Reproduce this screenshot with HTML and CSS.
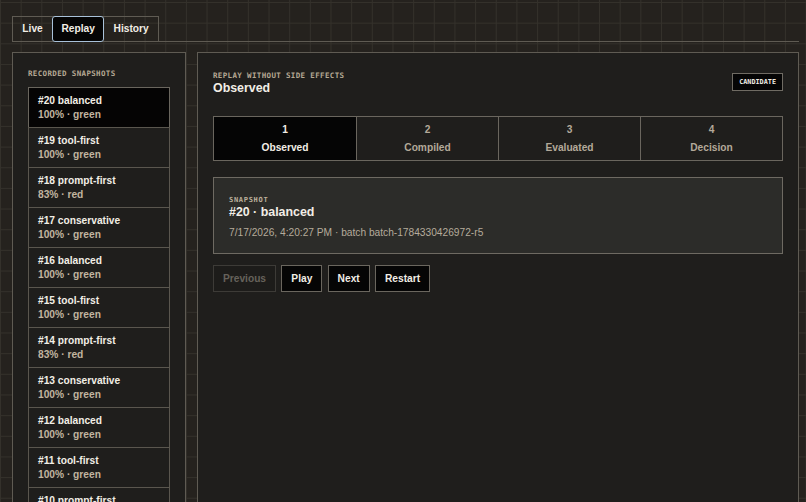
FILE: index.html
```html
<!DOCTYPE html>
<html>
<head>
<meta charset="utf-8">
<link rel="stylesheet" href="styles.css">
</head>
<body>
<div class="page">
  <nav class="nav">
    <div class="tabs">
      <div class="tab">Live</div>
      <div class="tab active">Replay</div>
      <div class="tab">History</div>
    </div>
  </nav>
  <main class="layout">
    <aside class="panel side">
      <div class="label">RECORDED SNAPSHOTS</div>
      <ul class="list">
        <li class="item selected"><div class="t">#20 balanced</div><div class="s">100% · green</div></li>
        <li class="item"><div class="t">#19 tool-first</div><div class="s">100% · green</div></li>
        <li class="item"><div class="t">#18 prompt-first</div><div class="s">83% · red</div></li>
        <li class="item"><div class="t">#17 conservative</div><div class="s">100% · green</div></li>
        <li class="item"><div class="t">#16 balanced</div><div class="s">100% · green</div></li>
        <li class="item"><div class="t">#15 tool-first</div><div class="s">100% · green</div></li>
        <li class="item"><div class="t">#14 prompt-first</div><div class="s">83% · red</div></li>
        <li class="item"><div class="t">#13 conservative</div><div class="s">100% · green</div></li>
        <li class="item"><div class="t">#12 balanced</div><div class="s">100% · green</div></li>
        <li class="item"><div class="t">#11 tool-first</div><div class="s">100% · green</div></li>
        <li class="item"><div class="t">#10 prompt-first</div><div class="s">83% · red</div></li>
        <li class="item"><div class="t">#9 conservative</div><div class="s">100% · green</div></li>
      </ul>
    </aside>
    <section class="panel main">
      <header class="head">
        <div>
          <div class="label">REPLAY WITHOUT SIDE EFFECTS</div>
          <h1 class="title">Observed</h1>
        </div>
        <span class="badge">CANDIDATE</span>
      </header>
      <div class="steps">
        <div class="step current"><div class="n">1</div><div class="l">Observed</div></div>
        <div class="step"><div class="n">2</div><div class="l">Compiled</div></div>
        <div class="step"><div class="n">3</div><div class="l">Evaluated</div></div>
        <div class="step"><div class="n">4</div><div class="l">Decision</div></div>
      </div>
      <div class="card">
        <div class="label small">SNAPSHOT</div>
        <div class="card-title">#20 · balanced</div>
        <div class="meta">7/17/2026, 4:20:27 PM · batch batch-1784330426972-r5</div>
      </div>
      <div class="controls">
        <button class="btn" disabled>Previous</button>
        <button class="btn">Play</button>
        <button class="btn">Next</button>
        <button class="btn">Restart</button>
      </div>
    </section>
  </main>
</div>
</body>
</html>
```
FILE: styles.css
```css
html, body {
  margin: 0;
  padding: 0;
  height: 100%;
  overflow: hidden;
}
body {
  background-color: #25221e;
  background-image:
    linear-gradient(#34312b 1px, transparent 1px),
    linear-gradient(90deg, #34312b 1px, transparent 1px);
  background-size: 20.67px 20.67px;
  background-position: 0 2px, 0 0;
  font-family: "Liberation Sans", Arial, sans-serif;
  font-size: 10.2px;
  color: #f2eee6;
}
.page {
  padding: 16px 7px 0 12px;
}
.nav {
  display: flex;
  border-bottom: 1px solid #5f5b53;
}
.tabs {
  display: flex;
  border: 1px solid #5f5b53;
  margin-bottom: -1px;
  height: 24px;
}
.tab {
  font-weight: bold;
  padding: 0 8.35px;
  border: 1px solid transparent;
  border-top: 0;
  border-bottom: 0;
  line-height: 24px;
  color: #f2eee6;
}
.tab.active {
  margin: -1px 0;
  height: 24px;
  border: 1px solid #a9c2da;
  border-radius: 3px;
  background: #050505;
  position: relative;
  z-index: 1;
}
.layout {
  display: grid;
  grid-template-columns: 174px 1fr;
  gap: 11px;
  margin-top: 10px;
}
.panel {
  background: #1f1e1c;
  border: 1px solid #5f5b53;
  min-height: 470px;
}
.side {
  padding: 16px 15px 0 15px;
}
.label {
  font-family: "DejaVu Sans Mono", "Liberation Mono", monospace;
  font-weight: bold;
  font-size: 7.5px;
  letter-spacing: 0.35px;
  line-height: 9px;
  color: #b6a994;
}
.list {
  list-style: none;
  margin: 9px 0 0 0;
  padding: 0;
}
.item {
  border: 1px solid #5a564e;
  margin-top: -1px;
  padding: 6px 9px 5px;
}
.item:first-child {
  margin-top: 0;
}
.item.selected {
  background: #050404;
  border-color: #6a665e;
}
.item .t {
  font-weight: bold;
  line-height: 14px;
  color: #f2eee6;
}
.item .s {
  font-weight: bold;
  line-height: 14px;
  color: #c2b5a0;
}
.main {
  padding: 17px 15px 0 15px;
}
.head {
  display: flex;
  justify-content: space-between;
  align-items: flex-start;
}
.head .label {
  line-height: 11px;
}
.title {
  margin: 0;
  font-size: 12.4px;
  line-height: 15px;
  font-weight: bold;
  color: #f2eee6;
}
.badge {
  font-family: "DejaVu Sans Mono", "Liberation Mono", monospace;
  font-weight: bold;
  font-size: 6.8px;
  letter-spacing: 0;
  color: #f2eee6;
  background: #050505;
  border: 1px solid #6f6b63;
  padding: 0 6px;
  line-height: 16px;
  margin-top: 3px;
}
.steps {
  display: grid;
  grid-template-columns: repeat(4, 1fr);
  margin-top: 20px;
  border: 1px solid #6a665e;
}
.step {
  text-align: center;
  padding: 6px 0 5px;
  font-weight: bold;
  color: #b3a999;
  border-left: 1px solid #6a665e;
}
.step:first-child {
  border-left: 0;
}
.step.current {
  background: #050505;
  color: #f2eee6;
}
.step .n {
  line-height: 14px;
}
.step .l {
  margin-top: 4px;
  line-height: 14px;
}
.card {
  margin-top: 16px;
  background: #2c2c29;
  border: 1px solid #6e6a62;
  padding: 17px 15px 13px;
}
.label.small {
  font-size: 7px;
  letter-spacing: 0.7px;
  line-height: 10px;
  color: #bdb19d;
}
.card-title {
  font-size: 12.4px;
  font-weight: bold;
  line-height: 15px;
}
.meta {
  margin-top: 5px;
  line-height: 15px;
  color: #b5ab9b;
}
.controls {
  display: flex;
  gap: 5.3px;
  margin-top: 11px;
}
.btn {
  font-family: "Liberation Sans", Arial, sans-serif;
  font-size: 10.2px;
  font-weight: bold;
  height: 27px;
  padding: 0 9px;
  background: #050505;
  color: #f2eee6;
  border: 1px solid #6a665e;
  border-radius: 0;
}
.btn:disabled {
  background: #1d1c1a;
  color: #66625b;
  border-color: #3d3b37;
}
```
